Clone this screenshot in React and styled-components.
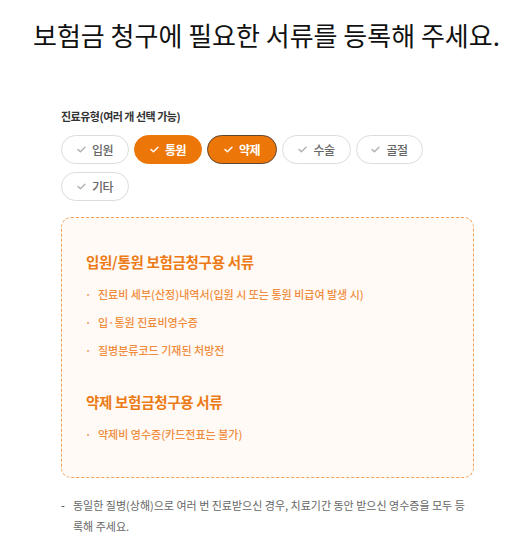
import React, { useState } from "react";
import styled, { createGlobalStyle } from "styled-components";

const GlobalStyle = createGlobalStyle`
  body {
    margin: 0;
    background: #ffffff;
    font-family: "Noto Sans CJK KR", "Noto Sans", sans-serif;
  }
`;

const Page = styled.div`
  width: 515px;
  padding: 14px 0 0;
`;

const Title = styled.h1`
  margin: 0;
  padding-left: 18px;
  text-align: center;
  font-size: 26px;
  font-weight: 400;
  color: #111;
  letter-spacing: 0;
  line-height: 42px;
`;

const Section = styled.div`
  padding: 52px 42px 0 61px;
`;

const Label = styled.div`
  font-size: 11px;
  font-weight: 700;
  color: #333;
  letter-spacing: -0.5px;
  line-height: 16px;
`;

const ChipWrap = styled.div`
  display: flex;
  flex-wrap: wrap;
  gap: 8px 5px;
  margin-top: 11px;
  width: 380px;
`;

const Chip = styled.button`
  display: flex;
  align-items: center;
  justify-content: center;
  gap: 6px;
  width: ${(p) => p.$w || 68}px;
  height: 29px;
  border-radius: 15px;
  padding: 0;
  font-family: inherit;
  font-size: 12px;
  font-weight: ${(p) => (p.$on ? 700 : 500)};
  letter-spacing: -0.5px;
  color: ${(p) => (p.$on ? "#fff" : "#666")};
  background: ${(p) => (p.$on ? "#ec7607" : "#fff")};
  border: 1px solid ${(p) => (p.$focus ? "#5c4632" : p.$on ? "#ec7607" : "#dcdcdc")};
  cursor: pointer;
  svg {
    stroke: ${(p) => (p.$on ? "#fff" : "#b0b0b0")};
  }
`;

const InfoBox = styled.div`
  margin-top: 16px;
  width: 413px;
  box-sizing: border-box;
  border: 1.5px dashed #f2a058;
  border-radius: 10px;
  background: #fffaf5;
  padding: 33px 24px 35px 24px;
`;

const BoxHeading = styled.h3`
  margin: 0 0 13px;
  font-size: 14.5px;
  font-weight: 700;
  color: #ec7a16;
  letter-spacing: -0.3px;
  line-height: 22px;
`;

const DocList = styled.ul`
  list-style: none;
  margin: 0;
  padding: 0;
  & + h3 {
    margin-top: 33px;
  }
`;

const DocItem = styled.li`
  position: relative;
  padding-left: 12px;
  font-size: 11px;
  font-weight: 500;
  color: #f08c3e;
  letter-spacing: 0;
  line-height: 16px;
  & + & {
    margin-top: 12px;
  }
  &::before {
    content: "·";
    position: absolute;
    left: -1px;
    top: 0;
  }
`;

const Note = styled.p`
  position: relative;
  margin: 17px 0 0;
  padding-left: 12px;
  font-size: 11px;
  color: #666;
  letter-spacing: 0;
  line-height: 21px;
  word-break: break-all;
  &::before {
    content: "-";
    position: absolute;
    left: 0;
    top: 0;
    color: #333;
  }
`;

const Check = () => (
  <svg width="9" height="7" viewBox="0 0 9 7" fill="none" strokeWidth="1.4" strokeLinecap="round" strokeLinejoin="round">
    <path d="M1 3.5 L3.4 5.8 L8 1.2" />
  </svg>
);

const types = [
  { name: "입원", w: 68 },
  { name: "통원", w: 68, on: true },
  { name: "약제", w: 70, on: true, focus: true },
  { name: "수술", w: 69 },
  { name: "골절", w: 67 },
  { name: "기타", w: 68 },
];

export default function App() {
  const [sel, setSel] = useState(types);
  const toggle = (i) =>
    setSel((s) => s.map((t, j) => (j === i ? { ...t, on: !t.on } : t)));

  return (
    <Page>
      <GlobalStyle />
      <Title>보험금 청구에 필요한 서류를 등록해 주세요.</Title>
      <Section>
        <Label>진료유형(여러 개 선택 가능)</Label>
        <ChipWrap>
          {sel.map((t, i) => (
            <Chip key={t.name} $w={t.w} $on={t.on} $focus={t.focus} onClick={() => toggle(i)}>
              <Check />
              {t.name}
            </Chip>
          ))}
        </ChipWrap>
        <InfoBox>
          <BoxHeading>입원/통원 보험금청구용 서류</BoxHeading>
          <DocList>
            <DocItem>진료비 세부(산정)내역서(입원 시 또는 통원 비급여 발생 시)</DocItem>
            <DocItem>입·통원 진료비영수증</DocItem>
            <DocItem>질병분류코드 기재된 처방전</DocItem>
          </DocList>
          <BoxHeading>약제 보험금청구용 서류</BoxHeading>
          <DocList>
            <DocItem>약제비 영수증(카드전표는 불가)</DocItem>
          </DocList>
        </InfoBox>
        <Note>
          동일한 질병(상해)으로 여러 번 진료받으신 경우, 치료기간 동안 받으신 영수증을 모두 등록해 주세요.
        </Note>
      </Section>
    </Page>
  );
}
